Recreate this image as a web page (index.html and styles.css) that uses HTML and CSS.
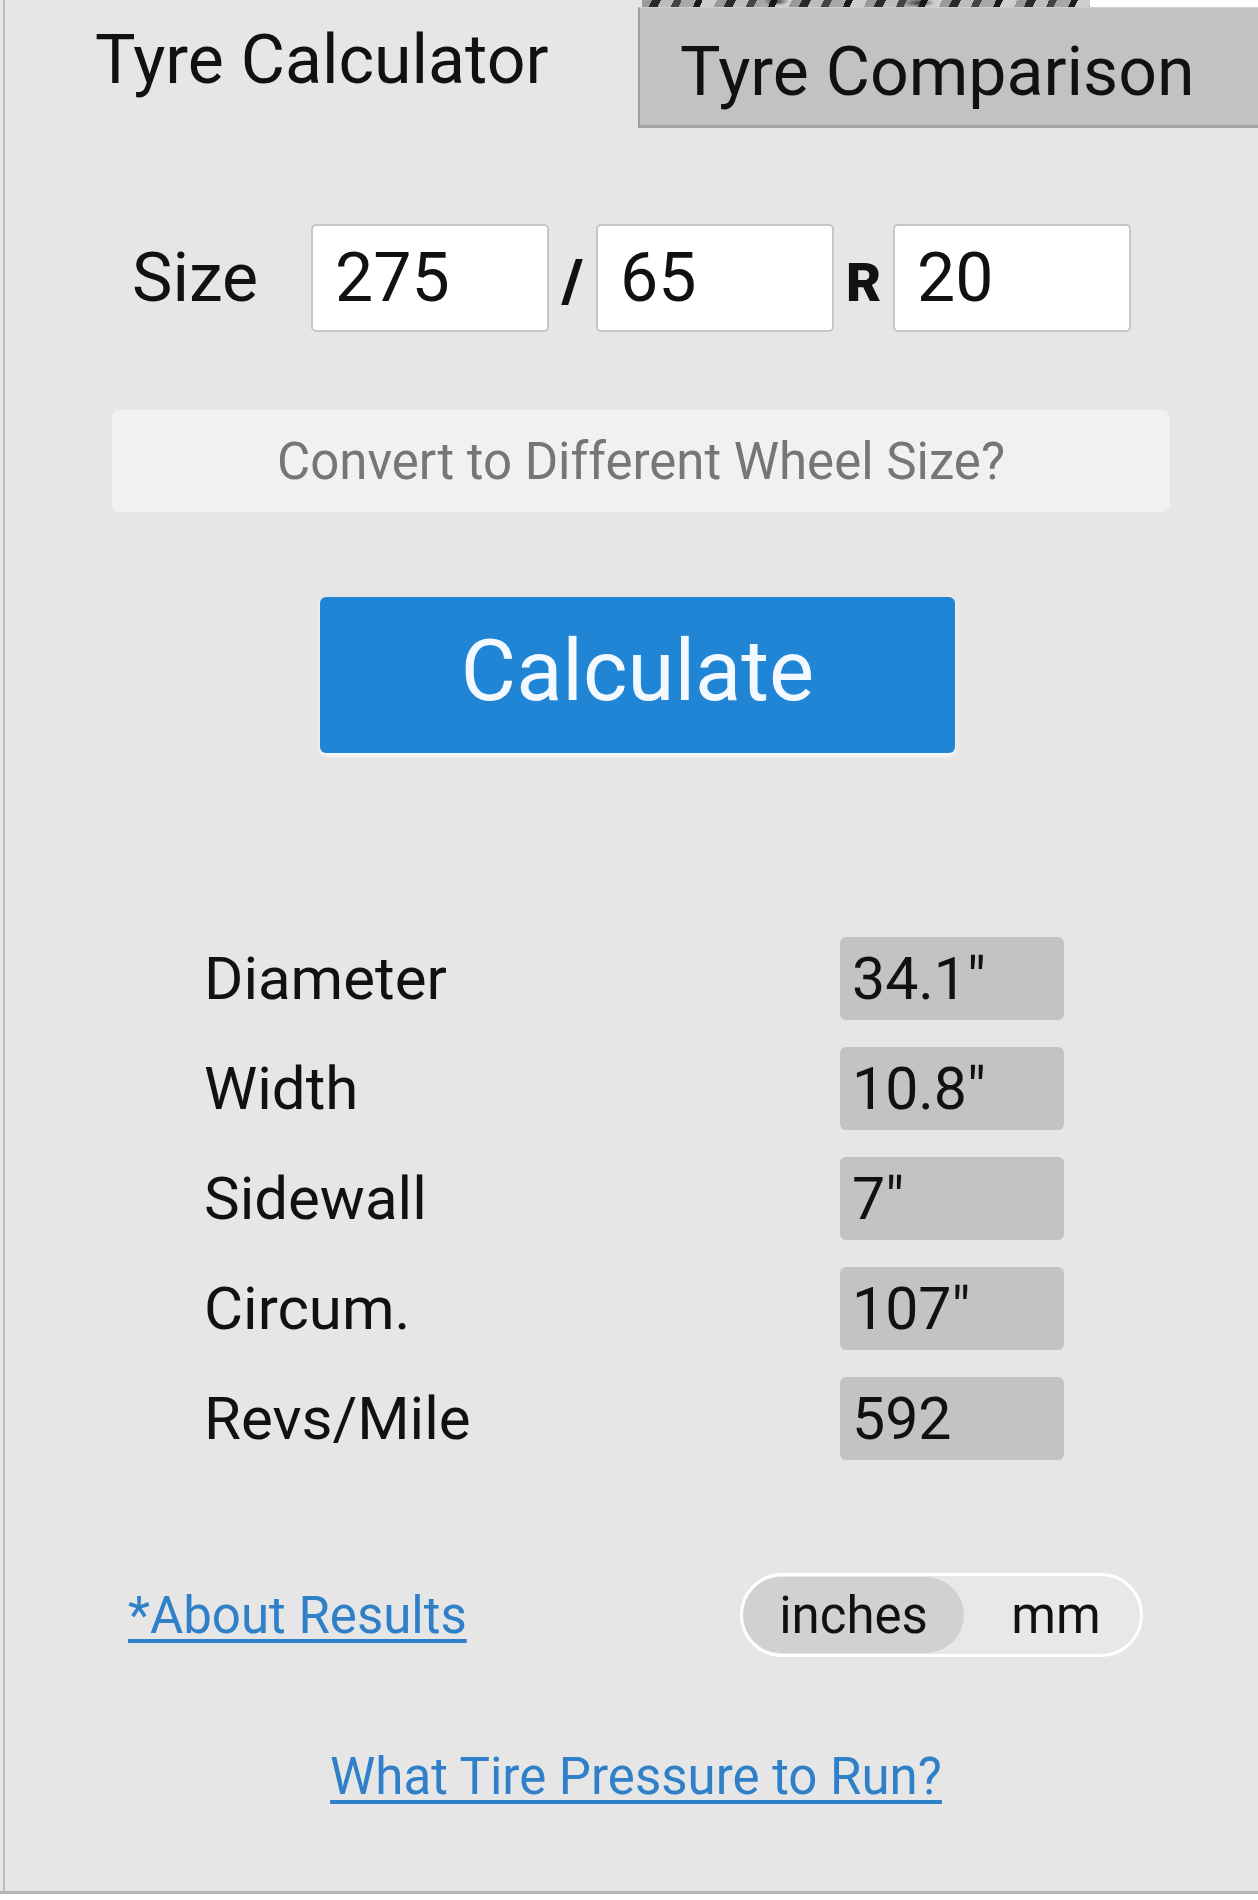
FILE: index.html
```html
<!DOCTYPE html>
<html lang="en">
<head>
<meta charset="utf-8">
<title>Tyre Calculator</title>
<link rel="stylesheet" href="styles.css">
</head>
<body>
<div class="app">
  <div class="frame">
    <div class="tabs">
      <div class="tab-active">Tyre Calculator</div>
      <div class="tab-other">
        <div class="tread-row">
          <div class="tread-gap"></div>
          <div class="tread"></div>
          <div class="tread-rest"></div>
        </div>
        <div class="tab-box">Tyre Comparison</div>
      </div>
    </div>

    <div class="size-row">
      <span class="size-label">Size</span>
      <input class="field" type="text" value="275">
      <span class="sep sep-slash">/</span>
      <input class="field" type="text" value="65">
      <span class="sep sep-r">R</span>
      <input class="field" type="text" value="20">
    </div>

    <div class="convert">Convert to Different Wheel Size?</div>

    <button class="calc" type="button">Calculate</button>

    <div class="results">
      <div class="row"><span class="row-label">Diameter</span><span class="row-value">34.1"</span></div>
      <div class="row"><span class="row-label">Width</span><span class="row-value">10.8"</span></div>
      <div class="row"><span class="row-label">Sidewall</span><span class="row-value">7"</span></div>
      <div class="row"><span class="row-label">Circum.</span><span class="row-value">107"</span></div>
      <div class="row"><span class="row-label">Revs/Mile</span><span class="row-value">592</span></div>
    </div>

    <div class="options">
      <a class="link about" href="#">*About Results</a>
      <div class="toggle">
        <span class="opt opt-on">inches</span>
        <span class="opt opt-off">mm</span>
      </div>
    </div>

    <div class="pressure">
      <a class="link" href="#">What Tire Pressure to Run?</a>
    </div>
  </div>
</div>
</body>
</html>
```

FILE: styles.css
```css
* {
  box-sizing: border-box;
}

html,
body {
  margin: 0;
  padding: 0;
  background: #ffffff;
}

body {
  font-family: Roboto, "Liberation Sans", Arial, sans-serif;
  color: #111111;
}

.app {
  height: 1894px;
  background: #e6e6e6;
  padding-left: 3px;
  border-bottom: 3px solid #b3b3b3;
}

.frame {
  height: 100%;
  border-left: 2px solid #bdbdbd;
}

/* Tabs */
.tabs {
  display: flex;
  height: 128px;
}

.tab-active {
  width: 633px;
  padding: 20px 0 0 90px;
  font-size: 68px;
  line-height: 80px;
  color: #111111;
}

.tab-other {
  flex: 1;
  display: flex;
  flex-direction: column;
}

.tread-row {
  display: flex;
  height: 7px;
}

.tread-gap {
  width: 4px;
  background: #e6e6e6;
}

.tread {
  width: 448px;
  background:
    radial-gradient(ellipse 18px 6px at 30% 20%, rgba(20, 20, 20, 0.8), transparent 70%),
    radial-gradient(ellipse 22px 6px at 62% 40%, rgba(20, 20, 20, 0.8), transparent 70%),
    repeating-linear-gradient(115deg,
      #9a9a9a 0 9px,
      #2a2a2a 9px 17px,
      #bdbdbd 17px 29px,
      #454545 29px 36px,
      #a8a8a8 36px 49px,
      #1a1a1a 49px 55px,
      #cfcfcf 55px 68px);
}

.tread-rest {
  flex: 1;
  background: #ffffff;
}

.tab-box {
  flex: 1;
  background: #c2c2c2;
  border-top: 1px solid #cfcfcf;
  border-left: 2px solid #9d9d9d;
  border-bottom: 3px solid #a3a3a3;
  padding: 24px 0 0 40px;
  font-size: 68px;
  line-height: 80px;
  color: #111111;
  white-space: nowrap;
}

/* Size row */
.size-row {
  display: flex;
  align-items: baseline;
  margin-top: 96px;
  height: 108px;
  padding-left: 127px;
}

.size-label {
  width: 179px;
  font-size: 68px;
  line-height: 80px;
}

.field {
  width: 238px;
  height: 108px;
  margin: 0;
  border: 2px solid #c6c6c6;
  border-radius: 5px;
  background: #ffffff;
  padding: 0 0 0 22px;
  font-family: Roboto, "Liberation Sans", Arial, sans-serif;
  font-size: 68px;
  line-height: normal;
  color: #111111;
  outline: none;
}

.sep {
  text-align: center;
  font-weight: 900;
  color: #111111;
}

.sep-slash {
  width: 47px;
  font-size: 60px;
}

.sep-r {
  width: 59px;
  font-size: 54px;
}

/* Convert */
.convert {
  margin: 78px 0 0 107px;
  width: 1058px;
  height: 102px;
  background: #f1f1f1;
  border-radius: 8px;
  display: flex;
  align-items: center;
  justify-content: center;
  font-size: 51px;
  color: #767676;
}

/* Calculate */
.calc {
  display: block;
  margin: 85px 0 0 315px;
  width: 635px;
  height: 156px;
  padding: 0 0 8px 0;
  background: #2185d6;
  border: none;
  border-radius: 6px;
  box-shadow: 0 3px 4px rgba(255, 255, 255, 0.8);
  color: #f3f9ff;
  font-family: Roboto, "Liberation Sans", Arial, sans-serif;
  font-size: 85px;
  cursor: pointer;
}

/* Results */
.results {
  margin: 184px 0 0 199px;
  display: flex;
  flex-direction: column;
  gap: 27px;
}

.row {
  display: flex;
  align-items: center;
  height: 83px;
}

.row-label {
  width: 636px;
  font-size: 60px;
}

.row-value {
  width: 224px;
  height: 83px;
  background: #c3c3c3;
  border-radius: 6px;
  display: flex;
  align-items: center;
  padding-left: 12px;
  font-size: 59px;
}

/* Options */
.options {
  display: flex;
  align-items: center;
  margin-top: 113px;
  height: 84px;
  padding-left: 123px;
  padding-right: 115px;
}

.link {
  font-size: 51px;
  line-height: 61px;
  color: #2f80c8;
  text-decoration: underline;
  text-decoration-thickness: 4px;
  text-underline-offset: 6px;
}

.toggle {
  margin-left: auto;
  width: 403px;
  height: 84px;
  border: 3px solid #ffffff;
  border-radius: 42px;
  background: #e8e8e8;
  padding: 1px 0 1px 0;
  display: flex;
}

.opt {
  display: flex;
  align-items: center;
  justify-content: center;
  font-size: 51px;
  color: #111111;
}

.opt-on {
  width: 221px;
  background: #d1d1d1;
  border-radius: 40px;
}

.opt-off {
  flex: 1;
  padding-left: 8px;
}

/* Pressure link */
.pressure {
  margin-top: 89px;
  text-align: center;
  padding-left: 9px;
  line-height: 61px;
}
```
